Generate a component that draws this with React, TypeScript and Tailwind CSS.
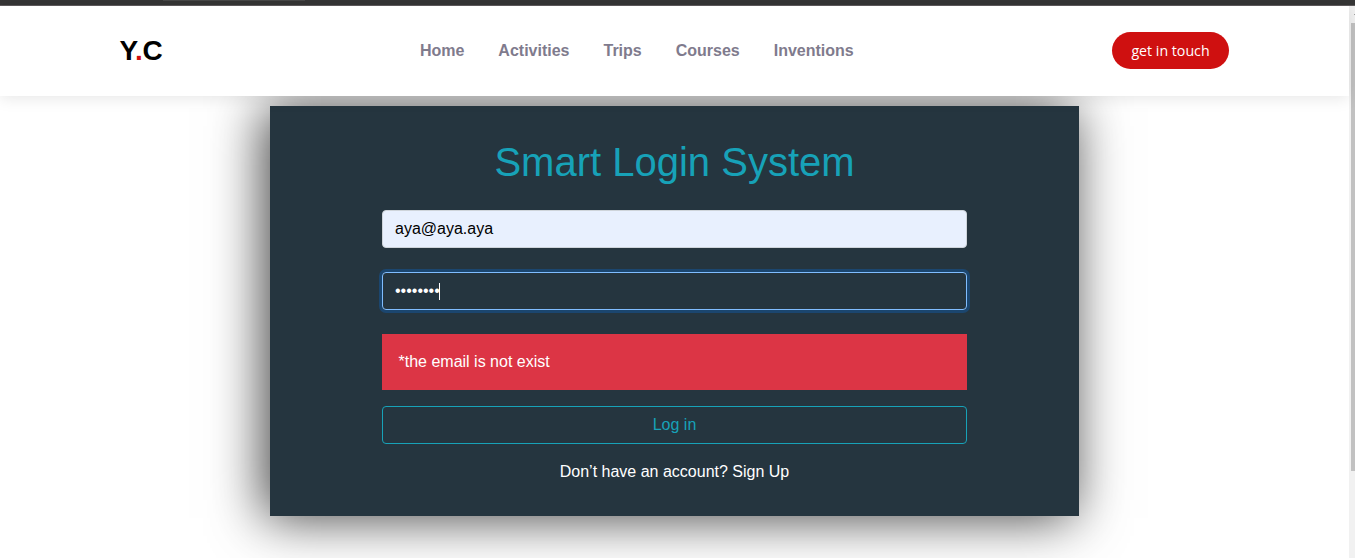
import React from 'react';

const links = ['Home', 'Activities', 'Trips', 'Courses', 'Inventions'];

export default function App() {
  return (
    <div className="flex h-[558px] flex-col overflow-hidden bg-white font-['Liberation_Sans',sans-serif] text-base text-[#212529]">
      <div className="h-[6px] shrink-0 border-b border-[#5f5b5d] bg-[#353535] pl-[163px]">
        <div className="h-px w-[142px] bg-[#484848]" />
      </div>
      <div className="flex min-h-0 flex-1">
        <div className="flex min-w-0 flex-1 flex-col">
          <header className="z-10 flex h-[90px] shrink-0 items-center bg-white pl-[119.5px] pr-[120px] shadow-[0_2px_15px_rgba(0,0,0,0.1)]">
            <a className="w-[300.4px] text-[28px] font-bold leading-none tracking-[-0.2px] text-black">
              Y<span className="text-[#cf1010]">.</span>C
            </a>
            <nav className="flex gap-[34px] font-bold text-[#7f7b8d]">
              {links.map((l) => <a key={l}>{l}</a>)}
            </nav>
            <button className="-mt-px ml-auto h-[37px] w-[117px] rounded-full bg-[#cf1010] font-['Open_Sans',sans-serif] text-[14.2px] font-medium text-white">
              get in touch
            </button>
          </header>
          <main className="mt-[10px] ml-[270px] flex h-[410px] w-[809px] flex-col bg-[#25353f] px-28 pt-8 shadow-[-6px_2px_50px_rgba(0,0,0,0.75)]">
            <h1 className="h-12 text-center text-[40px] leading-[48px] text-[#17a2b8]">Smart Login System</h1>
            <div className="mt-6 flex h-[38px] shrink-0 items-center rounded border border-[#ced4da] bg-[#e8f0fe] px-3 text-black">aya@aya.aya</div>
            <div className="mt-6 flex h-[38px] shrink-0 items-center rounded border border-[#80bdff] px-3 text-white shadow-[0_0_0_3px_rgba(0,123,255,0.25)]">
              <span>••••••••</span><span className="-ml-px h-[17px] w-px bg-white" />
            </div>
            <div className="mt-6 flex h-14 shrink-0 items-center bg-[#dc3545] pl-[16.5px] text-white">*the email is not exist</div>
            <button className="mt-4 h-[38px] shrink-0 rounded border border-[#17a2b8] text-[#17a2b8]">Log in</button>
            <p className="mt-4 text-center text-white">Don’t have an account? Sign Up</p>
          </main>
        </div>
        <div className="flex w-[6px] shrink-0 flex-col bg-[#f1f1f1] pl-[2px]">
          <div className="flex h-[17px] items-center justify-end">
            <span className="h-px w-px bg-[#a3a3a3]" />
          </div>
          <div className="h-[448px] bg-[#c1c1c1]" />
        </div>
      </div>
    </div>
  );
}
